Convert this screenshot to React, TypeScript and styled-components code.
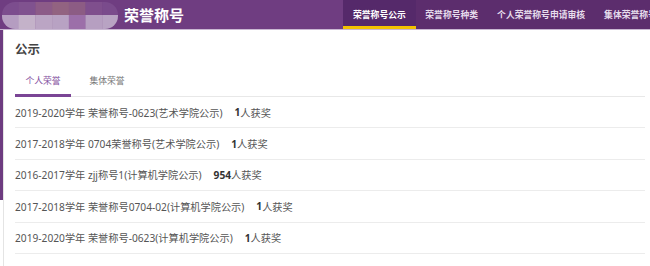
import React from 'react';
import styled, { createGlobalStyle, css } from 'styled-components';

const GlobalStyle = createGlobalStyle`
    body {
        margin: 0;
        background: #fff;
        font-family: "Noto Sans", "Noto Sans CJK SC", sans-serif;
    }
`;

const Page = styled.div`
    width: 650px;
    height: 266px;
    overflow: hidden;
`;

const TopBar = styled.header`
    display: flex;
    height: 29px;
    background-color: #6f3d81;
    border-bottom: 1px solid #c9b7d2;
`;

const Brand = styled.div`
    display: flex;
    align-items: center;
    width: 343px;
    flex-shrink: 0;
`;

const Logo = styled.svg`
    display: block;
    margin: 1px 6px 0 2px;
`;

const Title = styled.h1`
    margin: 0;
    color: #fff;
    font-size: 15px;
    font-weight: 700;
    font-family: "Noto Sans CJK SC", sans-serif;
`;

const Nav = styled.nav`
    display: flex;
    flex: 1;
    background-color: #5c2d6d;
    overflow: hidden;
`;

const NavItem = styled.a<{ active?: boolean }>`
    display: flex;
    align-items: center;
    padding: 3px 9.5px 0;
    white-space: nowrap;
    font-family: "Noto Sans CJK SC", sans-serif;
    font-size: 8.8px;
    font-weight: 700;
    color: #e6dcec;
    box-sizing: border-box;
    border-bottom: 3px solid transparent;
    ${props =>
      props.active &&
      css`
        padding: 3px 10px 0;
        color: #fff;
        background-color: #55296a;
        border-bottom-color: #f2c200;
    `}
`;

const Main = styled.div`
    display: flex;
    height: 236px;
    background: linear-gradient(#6d3b80, #6d3b80) no-repeat 0 0 / 4px 170px;
`;

const Panel = styled.section`
    width: 630px;
    margin-left: 3px;
    border-left: 1px solid #e4e4e4;
    padding-left: 11px;
`;

const Heading = styled.h2`
    margin: 0;
    height: 35px;
    line-height: 38px;
    font-size: 12.5px;
    font-weight: 700;
    color: #444;
    font-family: "Noto Sans CJK SC", sans-serif;
`;

const Tabs = styled.div`
    display: flex;
    height: 31px;
    border-bottom: 1px solid #e8e8e8;
`;

const Tab = styled.div<{ active?: boolean }>`
    display: flex;
    align-items: center;
    justify-content: center;
    width: 56px;
    margin-right: 8px;
    margin-bottom: -1px;
    box-sizing: border-box;
    padding-top: 1px;
    font-family: "Noto Sans CJK SC", sans-serif;
    font-size: 8.8px;
    color: #777;
    border-bottom: 3px solid transparent;
    ${props =>
      props.active &&
      css`
        color: #8450a0;
        border-bottom-color: #7a4595;
    `}
`;

const List = styled.ul`
    list-style: none;
    margin: 0;
    padding: 0;
`;

const Row = styled.li`
    display: flex;
    align-items: center;
    height: 31.4px;
    box-sizing: border-box;
    border-bottom: 1px solid #ececec;
    font-size: 10.2px;
    color: #555;
`;

const Name = styled.span`
    margin-right: 12px;
`;

const Count = styled.b`
    color: #333;
    font-weight: 700;
`;

// 로고는 원본에서 모자이크 처리되어 있음
const mosaic = [
    ['#7c4d8e', '#80528f', '#8c5b88', '#926381', '#8c5c84', '#7f4f8d', '#7a4b8c'],
    ['#b59dc1', '#c4b2c9', '#bba5c4', '#b8a2c3', '#9c6fa9', '#b69fc1', '#b8a3c3'],
];

const LogoMark = () => (
    <Logo width="116" height="27" viewBox="0 0 116 27">
        <defs>
            <clipPath id="pill">
                <rect x="0" y="0" width="116" height="27" rx="13" />
            </clipPath>
        </defs>
        <g clipPath="url(#pill)">
            {mosaic.map((cols, r) =>
                cols.map((c, i) => (
                    <rect key={`${r}-${i}`} x={i * 16.7} y={r * 13} width="17" height={r === 0 ? 13 : 14} fill={c} />
                ))
            )}
        </g>
    </Logo>
);

const records = [
    { name: '2019-2020学年 荣誉称号-0623(艺术学院公示)', count: 1 },
    { name: '2017-2018学年 0704荣誉称号(艺术学院公示)', count: 1 },
    { name: '2016-2017学年 zjj称号1(计算机学院公示)', count: 954 },
    { name: '2017-2018学年 荣誉称号0704-02(计算机学院公示)', count: 1 },
    { name: '2019-2020学年 荣誉称号-0623(计算机学院公示)', count: 1 },
];

const navItems = ['荣誉称号公示', '荣誉称号种类', '个人荣誉称号申请审核', '集体荣誉称号申请审核'];

const App = () => {
    return (
        <>
            <GlobalStyle />
            <Page>
                <TopBar>
                    <Brand>
                        <LogoMark />
                        <Title>荣誉称号</Title>
                    </Brand>
                    <Nav>
                        {navItems.map((item, i) => (
                            <NavItem key={item} active={i === 0}>{item}</NavItem>
                        ))}
                    </Nav>
                </TopBar>
                <Main>
                    <Panel>
                        <Heading>公示</Heading>
                        <Tabs>
                            <Tab active>个人荣誉</Tab>
                            <Tab>集体荣誉</Tab>
                        </Tabs>
                        <List>
                            {records.map((r, i) => (
                                <Row key={i}>
                                    <Name>{r.name}</Name>
                                    <Count>{r.count}</Count>人获奖
                                </Row>
                            ))}
                        </List>
                    </Panel>
                </Main>
            </Page>
        </>
    );
};

export default App;
